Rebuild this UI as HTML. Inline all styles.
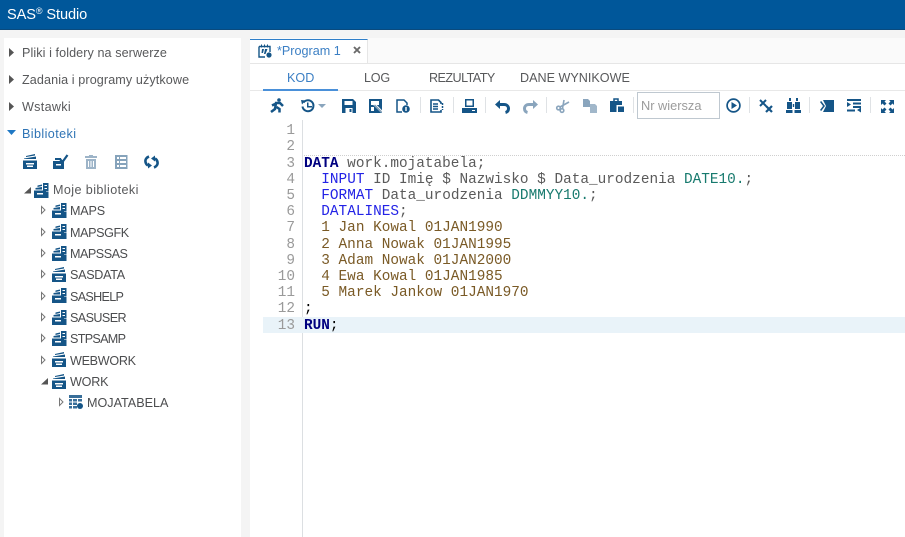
<!DOCTYPE html>
<html><head><meta charset="utf-8">
<style>
html,body{margin:0;padding:0}
body{width:905px;height:537px;overflow:hidden;position:relative;background:#f4f4f4;font-family:"Liberation Sans",sans-serif;color:#555}
#w{position:absolute;left:0;top:0;width:905px;height:537px;overflow:hidden;filter:blur(.3px)}
.a{position:absolute;white-space:pre}
svg{position:absolute;overflow:visible}
.t{font-size:12.6px;color:#58595b;line-height:16px}
.lib{font-size:12.6px;color:#4c4d4f;line-height:16px}
.c{position:absolute;left:304px;font:14.4px/16.2px "Liberation Mono",monospace;white-space:pre;color:#5a5a5a}
.n{position:absolute;left:263px;width:32px;text-align:right;font:14.4px/16.2px "Liberation Mono",monospace;color:#9a9a9a}
b{font-weight:bold;color:#000080}
.k{color:#2323e6}.f{color:#177a6e}.d{color:#7a5a26}
.sep{position:absolute;top:97px;width:1px;height:16px;background:#dfe2e5}
</style></head><body><div id="w">
<svg width="0" height="0" style="position:absolute"><defs>
<g id="lib"><path fill="#155587" d="M0 6.500h14V15H0z"/><path fill="#155587" d="M1 4.500l12-2v2.500H1zM3 2l9-2v1.500l-9 1.500z"/><path fill="#fff" d="M3 9h8v1.500H3zM4 11.500h6V13H4z"/></g>
<g id="mlib"><path fill="#155587" d="M0 7.500h12V15H0zM1.500 5l6.500-1v2.500H1.500zM3.500 2.500L8 1.500v1.500l-4.500 1z"/><path fill="#fff" d="M3 10h6v1.500H3z"/><path fill="#155587" d="M9 0h5.500v8H9z"/><path fill="#fff" d="M10.500 2h2.500v1h-2.500zM10.500 5h2.500v1h-2.500z"/><path fill="#155587" d="M12 8.500h2.500V15H12z"/></g>
<path id="open" fill="none" stroke="#777" d="M.5.500 4 4 .5 7.500z"/>
</defs></svg>

<div class="a" style="left:0;top:0;width:905px;height:30px;background:#00579a;border-bottom:1px solid #0a4a7d;box-sizing:border-box"></div>
<div class="a" style="left:7px;top:7px;font-size:14.6px;line-height:17px;color:#fff;letter-spacing:-.1px">SAS<sup style="font-size:9px;line-height:0;vertical-align:5px">®</sup> Studio</div>

<div class="a" style="left:4px;top:38px;width:237px;height:499px;background:#fff"></div>
<div class="a" style="left:250px;top:38px;width:655px;height:499px;background:#fff"></div>

<svg style="left:9px;top:48px" width="6" height="9"><path fill="#555" d="M0 0l5 4.500L0 9z"/></svg>
<svg style="left:9px;top:75px" width="6" height="9"><path fill="#555" d="M0 0l5 4.500L0 9z"/></svg>
<svg style="left:9px;top:102px" width="6" height="9"><path fill="#555" d="M0 0l5 4.500L0 9z"/></svg>
<svg style="left:7px;top:130px" width="10" height="6"><path fill="#1f78c4" d="M0 0h9L4.500 5z"/></svg>
<div class="a t" style="left:22px;top:45px;letter-spacing:.08px">Pliki i foldery na serwerze</div>
<div class="a t" style="left:22px;top:72px;letter-spacing:.1px">Zadania i programy użytkowe</div>
<div class="a t" style="left:22px;top:99px;letter-spacing:.3px">Wstawki</div>
<div class="a t" style="left:22px;top:126px;color:#2f74b5;letter-spacing:.4px">Biblioteki</div>

<svg style="left:23px;top:154px" width="15" height="15"><use href="#lib"/></svg>
<svg style="left:53px;top:154px" width="16" height="15"><path fill="#155587" d="M0 7h11v8H0zM2 4h6v2H2z"/><path fill="#fff" d="M3 10h5v1.500H3z"/><path fill="none" stroke="#155587" stroke-width="2.200" d="M7 5l2.500 3L14.500 1"/></svg>
<svg style="left:84px;top:155px" width="14" height="14"><path fill="#9db4c8" d="M5 0h4v1h4v2H1V1h4zM2 4h10v10H2z"/><path fill="#fff" d="M4 6h1v6H4zM6.500 6h1v6h-1zM9 6h1v6H9z"/></svg>
<svg style="left:115px;top:155px" width="13" height="14"><path fill="#86a3bb" d="M0 0h12.500v14H0z"/><path fill="#fff" d="M2 2h2v2H2zM5 2h6v2H5zM2 6h2v2H2zM5 6h6v2H5zM2 10h2v2H2zM5 10h6v2H5z"/></svg>
<svg style="left:144px;top:155px" width="15" height="14"><path fill="none" stroke="#155587" stroke-width="2.600" d="M5 1.500C2.500 2.500 1 4.500 1.500 7c.3 1.500 1 2.700 2.500 3.500M10 12.500c2.500-1 4-3 3.500-5.500-.3-1.500-1-2.700-2.500-3.500"/><path fill="#155587" d="M4 7.500l4 3-4 3zM11 6.500L7 3.500 11 .5z"/></svg>

<svg style="left:24px;top:187px" width="8" height="7"><path fill="#555" d="M7 0v6.500H0z"/></svg>
<svg style="left:34px;top:183px" width="15" height="15"><use href="#mlib"/></svg>
<div class="a lib" style="left:53px;top:182px;color:#58595b;letter-spacing:.4px">Moje biblioteki</div>

<svg style="left:41px;top:206px" width="6" height="9"><use href="#open"/></svg>
<svg style="left:52px;top:203px" width="15" height="15"><use href="#mlib"/></svg>
<div class="a lib" style="left:70px;top:203px;letter-spacing:-.2px">MAPS</div>
<svg style="left:41px;top:228px" width="6" height="9"><use href="#open"/></svg>
<svg style="left:52px;top:224px" width="15" height="15"><use href="#mlib"/></svg>
<div class="a lib" style="left:70px;top:225px;letter-spacing:-.4px">MAPSGFK</div>
<svg style="left:41px;top:249px" width="6" height="9"><use href="#open"/></svg>
<svg style="left:52px;top:246px" width="15" height="15"><use href="#mlib"/></svg>
<div class="a lib" style="left:70px;top:246px;letter-spacing:-.5px">MAPSSAS</div>
<svg style="left:41px;top:270px" width="6" height="9"><use href="#open"/></svg>
<svg style="left:52px;top:267px" width="15" height="15"><use href="#lib"/></svg>
<div class="a lib" style="left:70px;top:267px;letter-spacing:-.3px">SASDATA</div>
<svg style="left:41px;top:292px" width="6" height="9"><use href="#open"/></svg>
<svg style="left:52px;top:288px" width="15" height="15"><use href="#mlib"/></svg>
<div class="a lib" style="left:70px;top:289px;letter-spacing:-.7px">SASHELP</div>
<svg style="left:41px;top:313px" width="6" height="9"><use href="#open"/></svg>
<svg style="left:52px;top:310px" width="15" height="15"><use href="#mlib"/></svg>
<div class="a lib" style="left:70px;top:310px;letter-spacing:-.6px">SASUSER</div>
<svg style="left:41px;top:334px" width="6" height="9"><use href="#open"/></svg>
<svg style="left:52px;top:331px" width="15" height="15"><use href="#mlib"/></svg>
<div class="a lib" style="left:70px;top:331px;letter-spacing:-.7px">STPSAMP</div>
<svg style="left:41px;top:356px" width="6" height="9"><use href="#open"/></svg>
<svg style="left:52px;top:352px" width="15" height="15"><use href="#lib"/></svg>
<div class="a lib" style="left:70px;top:353px;letter-spacing:-.3px">WEBWORK</div>
<svg style="left:41px;top:378px" width="8" height="7"><path fill="#555" d="M7 0v6.500H0z"/></svg>
<svg style="left:52px;top:374px" width="15" height="15"><use href="#lib"/></svg>
<div class="a lib" style="left:70px;top:374px;letter-spacing:-.2px">WORK</div>
<svg style="left:59px;top:398px" width="6" height="9"><use href="#open"/></svg>
<svg style="left:69px;top:395px" width="14" height="14"><path fill="#155587" d="M0 0h13v3H0zM0 4h3v2.500H0zM4 4h4v2.500H4zM9 4h4v2.500H9zM0 7.500h3V10H0zM4 7.500h4V10H4zM0 11h3v2.500H0zM4 11h4v2.500H4z" opacity=".85"/><circle cx="11" cy="11" r="3" fill="#155587"/></svg>
<div class="a lib" style="left:87px;top:395px">MOJATABELA</div>

<!-- tab bar -->
<div class="a" style="left:250px;top:38px;width:655px;height:25px;background:#fafafa;border-bottom:1px solid #e6e6e6;box-sizing:content-box"></div>
<div class="a" style="left:250px;top:39px;width:118px;height:24px;background:#fff;border-top:1px solid #2f7fc9;border-right:1px solid #e6e6e6;box-sizing:border-box"></div>
<svg style="left:258px;top:44px" width="14" height="14"><path fill="none" stroke="#155587" stroke-width="1.400" d="M1 2.500h11V8M7 13H1V2.500"/><path fill="#155587" d="M3 .5h1v3H3zM6 .5h1v3H6zM9 .5h1v3H9zM4 5h2l-1 4H3.500zM7 5h2.500L7.500 10H6z"/><circle cx="11" cy="11" r="2.600" fill="#155587"/></svg>
<div class="a" style="left:277px;top:43px;font-size:12.6px;line-height:16px;color:#3b7fc4">*Program 1</div>
<svg style="left:353px;top:46px" width="9" height="9"><path stroke="#6a6a6a" stroke-width="1.900" d="M1 1l6 6M7 1L1 7"/></svg>

<!-- sub tabs -->
<div class="a" style="left:250px;top:90px;width:655px;height:1px;background:#e8e8e8"></div>
<div class="a" style="left:263px;top:89px;width:75px;height:2px;background:#4a90d9"></div>
<div class="a" style="left:287px;top:70px;font-size:12.6px;line-height:16px;color:#3b7fc4">KOD</div>
<div class="a" style="left:364px;top:70px;font-size:12.6px;line-height:16px;color:#58595b;letter-spacing:-.2px">LOG</div>
<div class="a" style="left:429px;top:70px;font-size:12.6px;line-height:16px;color:#58595b;letter-spacing:-.55px">REZULTATY</div>
<div class="a" style="left:520px;top:70px;font-size:12.6px;line-height:16px;color:#58595b">DANE WYNIKOWE</div>

<!-- toolbar -->
<svg style="left:270px;top:98px" width="14" height="15"><circle cx="9" cy="2" r="1.800" fill="#155587"/><path fill="none" stroke="#155587" stroke-width="2.500" d="M1 14l4-3 1-6 4 0 3 3M5 6L2 7.500M6.500 9l3 2v3.500"/></svg>
<svg style="left:301px;top:99px" width="26" height="14"><path fill="none" stroke="#155587" stroke-width="2" d="M2.500 3.500A5.500 5.500 0 1 1 1.500 7.500"/><path fill="#155587" d="M0 1l4.500.5L1 5.500zM6 3.500h1.500v3.500H11v1.500H6z"/><path fill="#8aa5bd" d="M17 5h8l-4 4z"/></svg>
<svg style="left:342px;top:99px" width="14" height="14"><path fill="#155587" d="M0 0h11l3 3v11H0z"/><path fill="#fff" d="M2.500 2h8v4h-8zM3.500 9h7v5h-7z"/><path fill="#155587" d="M7.500 10h2v3h-2z"/></svg>
<svg style="left:369px;top:99px" width="14" height="14"><path fill="#155587" d="M0 0h13v14H0z"/><path fill="#fff" d="M2 2h8v4H2zM2 8h3v4H2z"/><path fill="none" stroke="#fff" stroke-width="2.500" d="M5 5l8 8"/><path fill="none" stroke="#7f9db6" stroke-width="1.500" d="M5.500 6l7 7"/></svg>
<svg style="left:396px;top:99px" width="14" height="14"><path fill="none" stroke="#155587" stroke-width="1.500" d="M6 13H1V1h7l3 3v2"/><circle cx="10" cy="10" r="3.800" fill="#155587"/><path fill="#fff" d="M9.300 8h1.400v4H9.300z"/></svg>
<div class="sep" style="left:420px"></div>
<svg style="left:430px;top:99px" width="14" height="14"><path fill="none" stroke="#155587" stroke-width="1.600" d="M11 5V3.500L8.500 1H1v12h10v-2"/><path stroke="#155587" stroke-width="1.500" d="M3 5h5M3 7.500h5M3 10h5"/><path stroke="#155587" stroke-width="1.500" stroke-dasharray="2 1" d="M12.500 4v7"/></svg>
<div class="sep" style="left:453px"></div>
<svg style="left:462px;top:99px" width="15" height="14"><path fill="#155587" d="M3 0h9v8H3zM0 9h15v5H0z"/><path fill="#fff" d="M4.500 1.500h6v5h-6zM10 11h3v1h-3z"/></svg>
<div class="sep" style="left:485px"></div>
<svg style="left:495px;top:100px" width="15" height="13"><path fill="none" stroke="#155587" stroke-width="3" d="M3 4.500h6c3 0 4.500 2 4.500 4s-1 3.500-3 4"/><path fill="#155587" d="M5 0v9L0 4.500z"/></svg>
<svg style="left:523px;top:100px" width="15" height="13"><path fill="none" stroke="#8aa5bd" stroke-width="3" d="M12 4.500H6C3 4.500 1.500 6.500 1.500 8.500s1 3.500 3 4"/><path fill="#8aa5bd" d="M10 0v9l5-4.500z"/></svg>
<div class="sep" style="left:546px"></div>
<svg style="left:556px;top:99px" width="14" height="14"><g fill="none" stroke="#8aa5bd" stroke-width="1.600"><circle cx="2.500" cy="9" r="1.800"/><circle cx="6" cy="11.500" r="1.800"/><path d="M4 8l9-5M6.500 9.500L8 1"/></g></svg>
<svg style="left:583px;top:99px" width="14" height="14"><path fill="#8aa5bd" d="M0 0h5l2 2v6H0z"/><path fill="#8aa5bd" opacity=".8" d="M7 5h5l2 2v7H7z"/></svg>
<svg style="left:610px;top:98px" width="14" height="15"><path fill="#155587" d="M0 3h12v11H0z"/><path fill="none" stroke="#155587" stroke-width="1.500" d="M4 3V1h4v2"/><path fill="#fff" d="M6.500 7H14v8H6.500z"/><path fill="#155587" d="M8 8.500h6V14H8z"/></svg>
<div class="sep" style="left:633px"></div>
<div class="a" style="left:637px;top:92px;width:83px;height:27px;box-sizing:border-box;border:1px solid #bfc8d0;background:#fff"></div>
<div class="a" style="left:641px;top:98px;font-size:12.8px;line-height:15px;color:#9b9b9b">Nr wiersza</div>
<svg style="left:726px;top:98px" width="15" height="15"><circle cx="7.500" cy="7.500" r="6.400" fill="none" stroke="#155587" stroke-width="1.700"/><path fill="#155587" d="M5.500 4l5.500 3.500L5.500 11z"/></svg>
<div class="sep" style="left:749px"></div>
<svg style="left:760px;top:99px" width="14" height="14"><path stroke="#155587" stroke-width="2" d="M0 1l6 6M6 1L0 7"/><path stroke="#155587" stroke-width="2.200" d="M6 7l6 6M12 7l-6 6"/></svg>
<svg style="left:786px;top:98px" width="15" height="15"><path fill="#155587" d="M3 0h2v3H3zM10 0h2v3h-2zM1 4h5v7H1zM9 4h5v7H9zM0 12h6.500v3H0zM8.500 12H15v3H8.500zM6.800 6h1.400v3H6.800z"/></svg>
<div class="sep" style="left:809px"></div>
<svg style="left:820px;top:100px" width="14" height="12"><path fill="#155587" d="M3 0h11v12H3l3-6z"/><path fill="#155587" d="M0 2l1.200-1L5 6l-3.800 5L0 10l3-4z"/></svg>
<svg style="left:847px;top:99px" width="14" height="14"><path fill="#155587" d="M0 0h14v2H0zM6 3.500h8v2H6zM0 3l4 2.500L0 8zM6 7h8v2H6zM0 10.500h8v2H0zM14 8.500v5l-4-2.500z"/></svg>
<div class="sep" style="left:870px"></div>
<svg style="left:881px;top:100px" width="13" height="13"><path fill="#155587" d="M0 0h5L3.500 1.500 5.500 3.500 3.500 5.500 1.500 3.500 0 5zM13 0H8l1.500 1.500-2 2 2 2 2-2L13 5zM0 13h5l-1.500-1.500 2-2-2-2-2 2L0 8zM13 13H8l1.500-1.500-2-2 2-2 2 2L13 8z"/></svg>

<!-- editor -->
<div class="a" style="left:302px;top:120px;width:1px;height:417px;background:#dcdfe2"></div>
<div class="a" style="left:304px;top:155px;width:601px;height:0;border-top:1px dotted #cfcfcf"></div>
<div class="a" style="left:263px;top:317px;width:642px;height:16px;background:#e9f3f9"></div>

<div class="n" style="top:123px">1</div>
<div class="n" style="top:139px">2</div>
<div class="n" style="top:156px">3</div>
<div class="n" style="top:172px">4</div>
<div class="n" style="top:188px">5</div>
<div class="n" style="top:204px">6</div>
<div class="n" style="top:220px">7</div>
<div class="n" style="top:237px">8</div>
<div class="n" style="top:253px">9</div>
<div class="n" style="top:269px">10</div>
<div class="n" style="top:285px">11</div>
<div class="n" style="top:301px">12</div>
<div class="n" style="top:318px">13</div>

<div class="c" style="top:156px"><b>DATA</b> work.mojatabela;</div>
<div class="c" style="top:172px">  <span class="k">INPUT</span> ID Imię $ Nazwisko $ Data_urodzenia <span class="f">DATE10.</span>;</div>
<div class="c" style="top:188px">  <span class="k">FORMAT</span> Data_urodzenia <span class="f">DDMMYY10.</span>;</div>
<div class="c" style="top:204px">  <span class="k">DATALINES</span>;</div>
<div class="c d" style="top:220px">  1 Jan Kowal 01JAN1990</div>
<div class="c d" style="top:237px">  2 Anna Nowak 01JAN1995</div>
<div class="c d" style="top:253px">  3 Adam Nowak 01JAN2000</div>
<div class="c d" style="top:269px">  4 Ewa Kowal 01JAN1985</div>
<div class="c d" style="top:285px">  5 Marek Jankow 01JAN1970</div>
<div class="c" style="top:301px;color:#000">;</div>
<div class="c" style="top:318px;color:#000"><b>RUN</b>;</div>
</div></body></html>
